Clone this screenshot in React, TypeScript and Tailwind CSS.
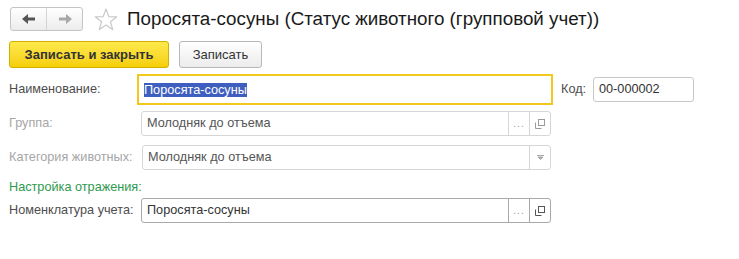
import React from "react";

const font = { fontFamily: '"Liberation Sans", Arial, sans-serif' };

function CopyIcon({ color = "#8a8a8a" }: { color?: string }) {
  return (
    <svg width="12" height="12" viewBox="0 0 12 12" fill="none">
      <path d="M1.5 4.5v6h6" stroke={color} strokeWidth="1" />
      <rect x="4.5" y="1.5" width="6" height="6" stroke={color} strokeWidth="1" />
    </svg>
  );
}

function ArrowLeft({ color }: { color: string }) {
  return (
    <svg width="14" height="10" viewBox="0 0 14 10">
      <path d="M0 5 L6 0 L6 3.5 L13 3.5 L13 6.5 L6 6.5 L6 10 Z" fill={color} />
    </svg>
  );
}

function ArrowRight({ color }: { color: string }) {
  return (
    <svg width="14" height="10" viewBox="0 0 14 10">
      <path d="M14 5 L8 0 L8 3.5 L1 3.5 L1 6.5 L8 6.5 L8 10 Z" fill={color} />
    </svg>
  );
}

function Star() {
  return (
    <svg width="24" height="23" viewBox="0 0 24 23">
      <path
        d="M12 1 L14.8 8.6 L22.8 8.8 L16.5 13.8 L18.7 21.6 L12 17 L5.3 21.6 L7.5 13.8 L1.2 8.8 L9.2 8.6 Z"
        fill="none"
        stroke="#c8c8c8"
        strokeWidth="1.2"
        strokeLinejoin="round"
      />
    </svg>
  );
}

function RefField({
  text,
  disabled,
  width,
}: {
  text: string;
  disabled?: boolean;
  width: string;
}) {
  const border = disabled ? "border-[#d6d6d6]" : "border-[#a8a8a8]";
  return (
    <div className={`flex h-[25px] ${width} rounded-[3px] border ${border} bg-white`}>
      <div
        className={`flex flex-1 items-center pl-[5px] ${
          disabled ? "text-[#555]" : "text-[#333]"
        }`}
      >
        {text}
      </div>
      <div
        className={`flex w-[21px] items-end justify-center border-l ${border} pb-[6px] text-[10px] leading-none tracking-[1px] text-[#999]`}
      >
        ...
      </div>
      <div className={`flex w-[21px] items-center justify-center border-l ${border}`}>
        <CopyIcon color={disabled ? "#9a9a9a" : "#555"} />
      </div>
    </div>
  );
}

export default function App() {
  return (
    <div className="h-[259px] w-[739px] bg-white text-[12.7px] text-[#4d4d4d]" style={font}>
      {/* header */}
      <div className="flex items-center pl-[10px] pt-[7px]">
        <div className="flex h-[24px] w-[73px] rounded-[3px] border border-[#c4c4c4] bg-gradient-to-b from-white to-[#ececec]">
          <div className="flex w-[36px] items-center justify-center border-r border-[#d4d4d4]">
            <ArrowLeft color="#555" />
          </div>
          <div className="flex flex-1 items-center justify-center">
            <ArrowRight color="#a8a8a8" />
          </div>
        </div>
        <div className="ml-[11px] flex items-center">
          <Star />
        </div>
        <div className="ml-[9px] text-[18.8px] leading-none text-[#1a1a1a]">
          Поросята-сосуны (Статус животного (групповой учет))
        </div>
      </div>

      {/* command bar */}
      <div className="mt-[10px] flex items-center gap-[10px] pl-[9px]">
        <button className="h-[27px] w-[160px] rounded-[3px] border border-[#d1b000] bg-gradient-to-b from-[#ffe94a] to-[#f5cf00] text-[13px] font-bold text-[#333]">
          Записать и закрыть
        </button>
        <button className="h-[27px] w-[83px] rounded-[3px] border border-[#b8b8b8] bg-gradient-to-b from-white to-[#ececec] text-[13px] text-[#333]">
          Записать
        </button>
      </div>

      {/* form */}
      <div className="mt-[6px] pl-[9px]">
        <div className="flex items-center">
          <div className="w-[128px]">Наименование:</div>
          <div className="flex h-[31px] w-[416px] items-center border-2 border-[#f2c81c] pl-[5px]">
            <span className="bg-[#3f5fc0] leading-[14px] text-white">Поросята-сосуны</span>
          </div>
          <div className="ml-[8px] w-[32px]">Код:</div>
          <div className="flex h-[25px] w-[101px] items-center rounded-[3px] border border-[#c8c8c8] pl-[5px] text-[#333]">
            00-000002
          </div>
        </div>

        <div className="mt-[6px] flex items-center">
          <div className="w-[132px] text-[#a6a6a6]">Группа:</div>
          <RefField text="Молодняк до отъема" disabled width="w-[410px]" />
        </div>

        <div className="mt-[9px] flex items-center">
          <div className="w-[133px] text-[#a6a6a6]">Категория животных:</div>
          <div className="flex h-[25px] w-[409px] rounded-[3px] border border-[#d6d6d6] bg-white">
            <div className="flex flex-1 items-center pl-[5px] text-[#555]">Молодняк до отъема</div>
            <div className="flex w-[21px] items-center justify-center border-l border-[#d6d6d6]">
              <svg width="7" height="5" viewBox="0 0 7 5">
                <path d="M0 0.5 H7 M1 2 H6 L3.5 4.5 Z" stroke="#aaa" fill="#aaa" strokeWidth="1" />
              </svg>
            </div>
          </div>
        </div>

        <div className="mt-[8px] text-[#2e9a4e]">Настройка отражения:</div>

        <div className="mt-[1px] flex items-center">
          <div className="w-[132px] text-[#4d4d4d]">Номенклатура учета:</div>
          <RefField text="Поросята-сосуны" width="w-[410px]" />
        </div>
      </div>
    </div>
  );
}
